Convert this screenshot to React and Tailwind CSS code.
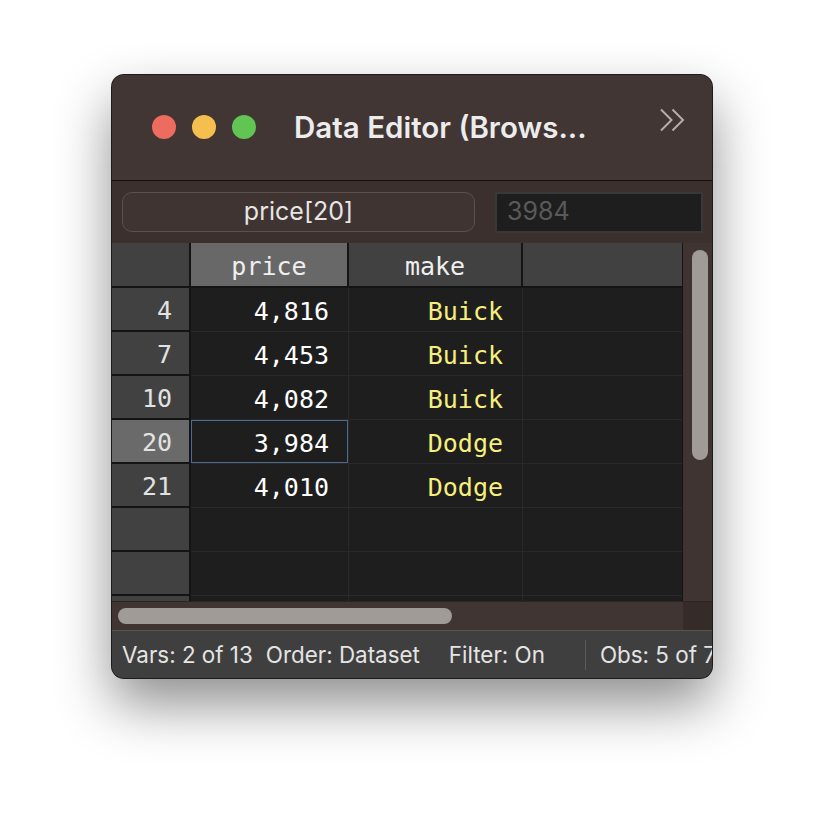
import React from "react";

const ui = "font-['Inter','Liberation_Sans',sans-serif]";
const mono = "font-['DejaVu_Sans_Mono','Liberation_Mono',monospace]";

const rows = [
  { n: "4", price: "4,816", make: "Buick" },
  { n: "7", price: "4,453", make: "Buick" },
  { n: "10", price: "4,082", make: "Buick" },
  { n: "20", price: "3,984", make: "Dodge", active: true },
  { n: "21", price: "4,010", make: "Dodge" },
  { n: "", price: "", make: "" },
  { n: "", price: "", make: "" },
  { n: "", price: "", make: "" },
];

function Chevrons() {
  return (
    <svg width="27" height="24" viewBox="0 0 27 24" fill="none">
      <polyline points="2,1.5 12.5,12 2,22.5" stroke="#b6aeab" strokeWidth="2" />
      <polyline points="13.5,1.5 24,12 13.5,22.5" stroke="#b6aeab" strokeWidth="2" />
    </svg>
  );
}

export default function App() {
  return (
    <div className="min-h-screen bg-white pt-[75px] pl-[112px]">
      <div
        className={`w-[600px] h-[603px] rounded-[12px] overflow-hidden flex flex-col bg-[#413634] ring-1 ring-[#1b1b1b] shadow-[0_26px_55px_rgba(0,0,0,0.45)] ${ui}`}
      >
        {/* TITLE BAR */}
        <div className="h-[105px] shrink-0 flex items-center pl-[40px] pr-[26px] pb-[1px] bg-[#413634]">
          <div className="flex gap-[16px]">
            <span className="w-[24px] h-[24px] rounded-full bg-[#ed6b5f]" />
            <span className="w-[24px] h-[24px] rounded-full bg-[#f5bf4f]" />
            <span className="w-[24px] h-[24px] rounded-full bg-[#61c554]" />
          </div>
          <h1 className="ml-[38px] text-[29.5px] font-semibold text-[#ececec]">
            Data Editor (Brows...
          </h1>
          <div className="ml-auto -mt-[14px]">
            <Chevrons />
          </div>
        </div>

        {/* TOOLBAR */}
        <div className="h-[63px] shrink-0 border-t border-[#141010] bg-[#3b302e] flex items-center pl-[10px] pr-[9px] gap-[20px]">
          <div className="w-[353px] h-[40px] rounded-[10px] border border-[#5c514e] bg-[#3f3432] flex items-center justify-center text-[25px] text-[#e6e6e6]">
            price[20]
          </div>
          <div className="flex-1 h-[41px] border-2 border-[#383838] bg-[#1e1e1e] flex items-center pl-[10px] text-[25px] text-[#5a5a5a]">
            3984
          </div>
        </div>

        {/* GRID */}
        <div className="h-[358px] shrink-0 flex overflow-hidden">
          <div className={`flex-1 flex flex-col overflow-hidden border-r border-[#141414] bg-[#1e1e1e] text-[25px] ${mono}`}>
            {/* header */}
            <div className="h-[45px] shrink-0 flex border-b-2 border-[#141414]">
              <div className="w-[79px] shrink-0 bg-[#414141] border-r-2 border-[#141414]" />
              <div className="w-[158px] shrink-0 bg-[#686868] border-r-2 border-[#141414] flex items-center justify-center pt-[4px] text-[#efefef]">
                price
              </div>
              <div className="w-[174px] shrink-0 bg-[#414141] border-r-2 border-[#141414] flex items-center justify-center pt-[4px] text-[#efefef]">
                make
              </div>
              <div className="flex-1 bg-[#414141]" />
            </div>
            {rows.map((r, i) => (
              <div key={i} className="h-[44px] shrink-0 flex">
                <div
                  className={`w-[79px] shrink-0 border-r-2 border-b-2 border-[#141414] flex items-center justify-end pt-[4px] pr-[17px] text-[#e2e2e2] ${
                    r.active ? "bg-[#6a6a6a]" : "bg-[#414141]"
                  }`}
                >
                  {r.n}
                </div>
                <div
                  className={`w-[158px] shrink-0 border-r border-b border-[#292929] flex items-center justify-end pt-[4px] pr-[19px] text-white ${
                    r.active ? "shadow-[inset_0_0_0_1px_#4d6a8f]" : ""
                  }`}
                >
                  {r.price}
                </div>
                <div className="w-[174px] shrink-0 border-r border-b border-[#292929] flex items-center justify-end pt-[4px] pr-[19px] text-[#f7ef7d]">
                  {r.make}
                </div>
                <div className="flex-1 border-b border-[#292929]" />
              </div>
            ))}
          </div>
          {/* vertical scrollbar */}
          <div className="w-[29px] shrink-0 bg-[#3f3432] pt-[7px] pl-[9px] pr-[4px]">
            <div className="h-[210px] rounded-full bg-[#a19b98]" />
          </div>
        </div>

        {/* HORIZONTAL SCROLLBAR */}
        <div className="h-[29px] shrink-0 flex border-t border-[#2e2523]">
          <div className="flex-1 bg-[#413533] flex items-center pl-[6px]">
            <div className="w-[334px] h-[16px] rounded-full bg-[#a19b98]" />
          </div>
          <div className="w-[29px] bg-[#352b29]" />
        </div>

        {/* STATUS BAR */}
        <div className="h-[48px] shrink-0 border-t border-[#555] bg-[#3f3f3f] flex items-center pl-[10px] text-[22.4px] text-[#e4e4e4] whitespace-nowrap overflow-hidden">
          <span>Vars: 2 of 13</span>
          <span className="ml-[13px]">Order: Dataset</span>
          <span className="ml-[29px]">Filter: On</span>
          <span className="ml-[40px] w-px h-[30px] bg-[#5a5a5a] shrink-0" />
          <span className="ml-[14px]">Obs: 5 of 74</span>
        </div>
      </div>
    </div>
  );
}
